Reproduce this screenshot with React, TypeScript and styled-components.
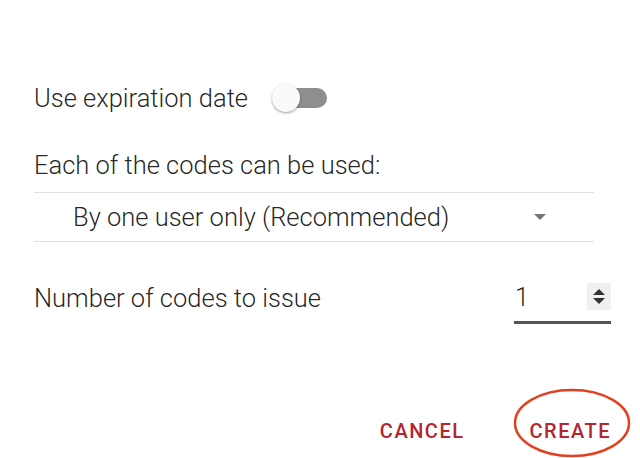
import React, { useState } from 'react'
import styled, { createGlobalStyle } from 'styled-components'

const GlobalStyle = createGlobalStyle`
  body {
    margin: 0;
    background: #fff;
    font-family: Roboto, 'Liberation Sans', sans-serif;
    color: rgba(0, 0, 0, 0.87);
  }
`

const Dialog = styled.div`
  width: 640px;
  height: 458px;
  box-sizing: border-box;
  padding: 83px 0 0 34px;
  overflow: hidden;
`

const Content = styled.div`
  width: 560px;
`

const ToggleRow = styled.div`
  display: flex;
  align-items: center;
  height: 30px;
`

const Label = styled.span`
  font-size: 25.5px;
  font-weight: 300;
  line-height: 30px;
`

const SwitchWrap = styled.div`
  position: relative;
  width: 58px;
  height: 30px;
  margin-left: 23px;
  cursor: pointer;
`

const Track = styled.div<{ $on: boolean }>`
  position: absolute;
  left: 9px;
  top: 5px;
  width: 47px;
  height: 20px;
  border-radius: 10px;
  background: ${({ $on }) => ($on ? '#e78a90' : '#8e8e8e')};
`

const Thumb = styled.div<{ $on: boolean }>`
  position: absolute;
  top: 1px;
  left: ${({ $on }) => ($on ? '29px' : '1px')};
  width: 28px;
  height: 28px;
  border-radius: 50%;
  background: ${({ $on }) => ($on ? '#b3262e' : '#fafafa')};
  box-shadow: 0 1px 3px rgba(0, 0, 0, 0.3), 0 1px 1px rgba(0, 0, 0, 0.12);
`

const SectionLabel = styled(Label)`
  display: block;
  margin-top: 37px;
`

const Select = styled.div`
  display: flex;
  align-items: center;
  justify-content: space-between;
  height: 48px;
  margin-top: 12px;
  padding: 0 48px 0 39px;
  border-top: 1px solid #e0e0e0;
  border-bottom: 1px solid #e0e0e0;
`

const Caret = styled.span`
  width: 0;
  height: 0;
  border-left: 6px solid transparent;
  border-right: 6px solid transparent;
  border-top: 6px solid #757575;
`

const NumberRow = styled.div`
  display: flex;
  align-items: center;
  justify-content: space-between;
  width: 577px;
  margin-top: 30px;
`

const NumberField = styled.div`
  display: flex;
  align-items: center;
  justify-content: space-between;
  box-sizing: border-box;
  width: 97px;
  height: 52px;
  padding: 0 0 0 1px;
  border-bottom: 3px solid #555;
`

const Spinner = styled.div`
  display: flex;
  flex-direction: column;
  align-items: center;
  justify-content: center;
  gap: 3px;
  width: 24px;
  height: 27px;
  background: #f0f0f0;
`

const Arrow = styled.span<{ $up?: boolean }>`
  width: 0;
  height: 0;
  border-left: 6px solid transparent;
  border-right: 6px solid transparent;
  ${({ $up }) => ($up ? 'border-bottom: 6px solid #333;' : 'border-top: 6px solid #333;')}
`

const Actions = styled.div`
  display: flex;
  justify-content: flex-end;
  gap: 33px;
  width: 593px;
  margin-top: 87px;
`

const TextButton = styled.button`
  position: relative;
  height: 40px;
  padding: 0 16px;
  border: none;
  background: none;
  font-family: Roboto, 'Liberation Sans', sans-serif;
  font-size: 20px;
  font-weight: 500;
  letter-spacing: 1.5px;
  text-transform: uppercase;
  color: #b3262e;
  cursor: pointer;
`

const Highlight = styled.svg`
  position: absolute;
  left: -1px;
  top: -23px;
  pointer-events: none;
`

export default function App() {
  const [expires, setExpires] = useState(false)

  return (
    <>
      <GlobalStyle />
      <Dialog>
        <Content>
          <ToggleRow>
            <Label>Use expiration date</Label>
            <SwitchWrap onClick={() => setExpires(!expires)}>
              <Track $on={expires} />
              <Thumb $on={expires} />
            </SwitchWrap>
          </ToggleRow>

          <SectionLabel>Each of the codes can be used:</SectionLabel>
          <Select>
            <Label>By one user only (Recommended)</Label>
            <Caret />
          </Select>

          <NumberRow>
            <Label>Number of codes to issue</Label>
            <NumberField>
              <Label>1</Label>
              <Spinner>
                <Arrow $up />
                <Arrow />
              </Spinner>
            </NumberField>
          </NumberRow>
        </Content>

        <Actions>
          <TextButton>Cancel</TextButton>
          <TextButton>
            Create
            <Highlight width="120" height="72" viewBox="0 0 120 72">
              <ellipse cx="59" cy="35" rx="57" ry="33" fill="none" stroke="#e2411f" strokeWidth="2.5" />
            </Highlight>
          </TextButton>
        </Actions>
      </Dialog>
    </>
  )
}
